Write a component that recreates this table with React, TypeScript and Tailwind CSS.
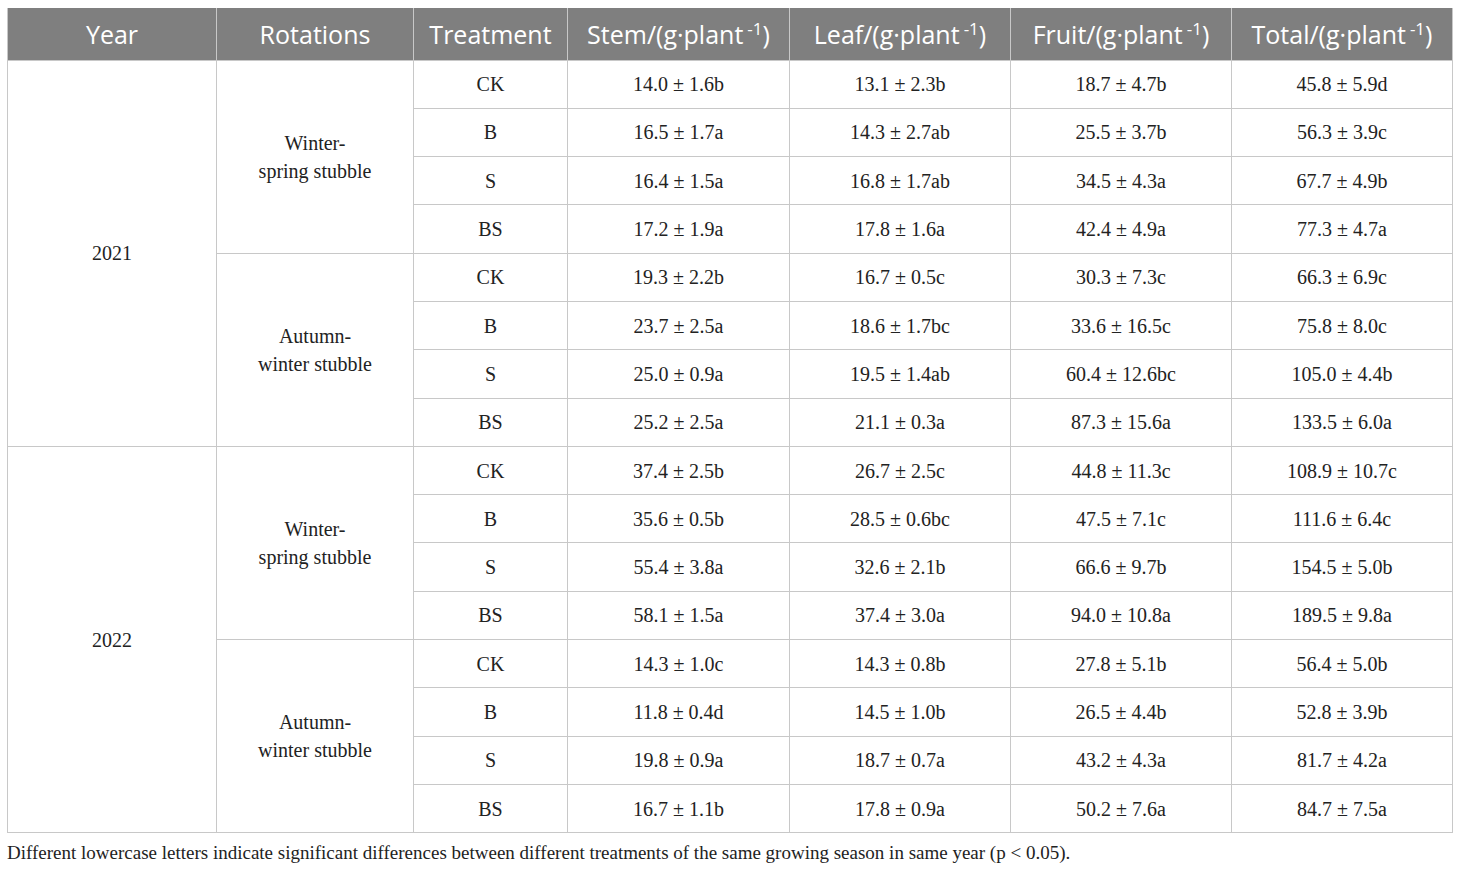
const rows = [
  { year: '2021', rot: ['Winter-', 'spring stubble'], data: [
    ['CK', '14.0 ± 1.6b', '13.1 ± 2.3b', '18.7 ± 4.7b', '45.8 ± 5.9d'],
    ['B', '16.5 ± 1.7a', '14.3 ± 2.7ab', '25.5 ± 3.7b', '56.3 ± 3.9c'],
    ['S', '16.4 ± 1.5a', '16.8 ± 1.7ab', '34.5 ± 4.3a', '67.7 ± 4.9b'],
    ['BS', '17.2 ± 1.9a', '17.8 ± 1.6a', '42.4 ± 4.9a', '77.3 ± 4.7a'],
  ] },
  { year: '2021', rot: ['Autumn-', 'winter stubble'], data: [
    ['CK', '19.3 ± 2.2b', '16.7 ± 0.5c', '30.3 ± 7.3c', '66.3 ± 6.9c'],
    ['B', '23.7 ± 2.5a', '18.6 ± 1.7bc', '33.6 ± 16.5c', '75.8 ± 8.0c'],
    ['S', '25.0 ± 0.9a', '19.5 ± 1.4ab', '60.4 ± 12.6bc', '105.0 ± 4.4b'],
    ['BS', '25.2 ± 2.5a', '21.1 ± 0.3a', '87.3 ± 15.6a', '133.5 ± 6.0a'],
  ] },
  { year: '2022', rot: ['Winter-', 'spring stubble'], data: [
    ['CK', '37.4 ± 2.5b', '26.7 ± 2.5c', '44.8 ± 11.3c', '108.9 ± 10.7c'],
    ['B', '35.6 ± 0.5b', '28.5 ± 0.6bc', '47.5 ± 7.1c', '111.6 ± 6.4c'],
    ['S', '55.4 ± 3.8a', '32.6 ± 2.1b', '66.6 ± 9.7b', '154.5 ± 5.0b'],
    ['BS', '58.1 ± 1.5a', '37.4 ± 3.0a', '94.0 ± 10.8a', '189.5 ± 9.8a'],
  ] },
  { year: '2022', rot: ['Autumn-', 'winter stubble'], data: [
    ['CK', '14.3 ± 1.0c', '14.3 ± 0.8b', '27.8 ± 5.1b', '56.4 ± 5.0b'],
    ['B', '11.8 ± 0.4d', '14.5 ± 1.0b', '26.5 ± 4.4b', '52.8 ± 3.9b'],
    ['S', '19.8 ± 0.9a', '18.7 ± 0.7a', '43.2 ± 4.3a', '81.7 ± 4.2a'],
    ['BS', '16.7 ± 1.1b', '17.8 ± 0.9a', '50.2 ± 7.6a', '84.7 ± 7.5a'],
  ] },
];

const Unit = ({ name }: { name: string }) => (
  <>
    {name}/(g·plant
    <span className="relative -top-[9px] ml-[4px] text-[17px] leading-none">-1</span>)
  </>
);

export default function App() {
  const cell = 'border border-[#c8c8c8] text-center align-middle h-[48.3px] p-0';
  const th = 'border border-[#c8c8c8] border-t-0 font-normal text-center text-white h-[52px] p-0';

  return (
    <div className="bg-white min-h-screen pl-[7px] pt-[8px] pr-[8px]">
      <table className="border-collapse w-[1445px] table-fixed text-[#222] font-['Liberation_Serif',serif] text-[20px]">
        <colgroup>
          <col className="w-[209px]" />
          <col className="w-[197px]" />
          <col className="w-[154px]" />
          <col className="w-[222px]" />
          <col className="w-[221px]" />
          <col className="w-[221px]" />
          <col className="w-[221px]" />
        </colgroup>
        <thead>
          <tr className="bg-[#7f7f7f] font-['Open_Sans',sans-serif] text-[25px] leading-[30px]">
            <th className={th}>Year</th>
            <th className={th}>Rotations</th>
            <th className={th}>Treatment</th>
            <th className={th}><Unit name="Stem" /></th>
            <th className={th}><Unit name="Leaf" /></th>
            <th className={th}><Unit name="Fruit" /></th>
            <th className={th}><Unit name="Total" /></th>
          </tr>
        </thead>
        <tbody>
          {rows.map((g, gi) =>
            g.data.map((r, ri) => (
              <tr key={`${gi}-${ri}`}>
                {ri === 0 && gi % 2 === 0 && (
                  <td rowSpan={8} className={cell}>{g.year}</td>
                )}
                {ri === 0 && (
                  <td rowSpan={4} className={`${cell} leading-[28px]`}>
                    {g.rot[0]}
                    <br />
                    {g.rot[1]}
                  </td>
                )}
                {r.map((v, i) => (
                  <td key={i} className={cell}>{v}</td>
                ))}
              </tr>
            ))
          )}
        </tbody>
      </table>
      <p className="mt-[6px] font-['Liberation_Serif',serif] text-[19px] text-[#222]">
        Different lowercase letters indicate significant differences between different treatments of the same growing season in same year (p &lt; 0.05).
      </p>
    </div>
  );
}
